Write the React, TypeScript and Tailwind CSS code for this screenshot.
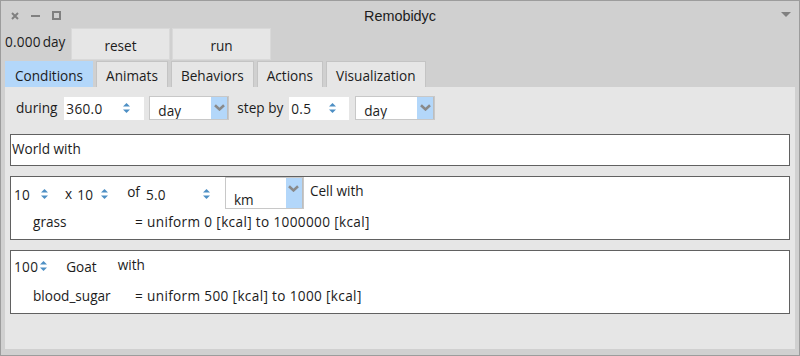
import React from 'react';

const font = { fontFamily: '"Open Sans", "Noto Sans", sans-serif' };

function Arrows() {
  return (
    <svg width="7" height="10" viewBox="0 0 7 10" className="shrink-0">
      <path d="M3.5 0 L7 3.5 L0 3.5 Z" fill="#4d8fc4" />
      <path d="M0 6.5 L7 6.5 L3.5 10 Z" fill="#4d8fc4" />
    </svg>
  );
}

function Spinner({ value, w, pl, pr, boxed }: { value: string; w: string; pl: string; pr: string; boxed?: boolean }) {
  return (
    <div className={`flex items-center justify-between h-[23px] ${pl} ${pr} ${w} ${boxed ? 'bg-white' : ''}`}>
      <span className="pt-[3px] tracking-[0.3px]">{value}</span>
      <Arrows />
    </div>
  );
}

function Chevron() {
  return (
    <svg width="11" height="7" viewBox="0 0 11 7">
      <path d="M1 1.2 L5.5 5.4 L10 1.2" fill="none" stroke="#8a8a8a" strokeWidth="2.6" />
    </svg>
  );
}

function Dropdown({ value, h, w }: { value: string; h: string; w: string }) {
  return (
    <div className={`flex ${w} ${h} border border-[#c8c8c8] bg-white`}>
      <div className="flex-1 pl-[8px] flex items-end overflow-hidden">
        <span className="leading-[16px]">{value}</span>
      </div>
      <div className="w-[17px] bg-[#b3d7fa] border-r border-[#bdbdbd] flex items-start justify-center pt-[7px]">
        <Chevron />
      </div>
    </div>
  );
}

function Tab({ label, active }: { label: string; active?: boolean }) {
  return (
    <div
      className={`h-[26px] px-[9px] flex items-center pt-[4px] border border-b-0 ${
        active ? 'bg-[#b3d7fa] border-[#b3d7fa]' : 'bg-[#e6e6e6] border-[#c4c4c4]'
      }`}
    >
      {label}
    </div>
  );
}

export default function App() {
  return (
    <div
      className="w-[800px] h-[356px] bg-[#d0d0d0] border border-[#9c9c9c] flex flex-col text-[13.6px] text-[#1c1c1c] overflow-hidden"
      style={font}
    >
      {/* title bar */}
      <div className="h-[27px] shrink-0 grid grid-cols-[1fr_auto_1fr] items-center">
        <div className="flex items-center gap-[12px] pl-[10px] pt-[2px]">
          <svg width="8" height="8" viewBox="0 0 8 8">
            <path d="M1 1 L7 7 M7 1 L1 7" stroke="#808080" strokeWidth="2" />
          </svg>
          <svg width="9" height="8" viewBox="0 0 9 8">
            <path d="M0 4 L9 4" stroke="#808080" strokeWidth="2" />
          </svg>
          <svg width="9" height="9" viewBox="0 0 9 9">
            <rect x="1" y="1" width="7" height="7" fill="none" stroke="#808080" strokeWidth="2" />
          </svg>
        </div>
        <div className="pt-[5px] text-[14.4px]" style={{ fontFamily: '"Liberation Sans", Arial, sans-serif' }}>
          Remobidyc
        </div>
        <div className="flex justify-end pr-[8px]">
          <svg width="10" height="6" viewBox="0 0 10 6">
            <path d="M0 0 L10 0 L5 5 Z" fill="#808080" />
          </svg>
        </div>
      </div>

      {/* toolbar */}
      <div className="h-[32px] shrink-0 flex items-stretch pl-[4px]">
        <div className="w-[66px] flex items-center pb-[4px]">
          <span className="tracking-[0.2px]">0.000</span>
          <span className="ml-[2px]">day</span>
        </div>
        <button className="w-[99px] bg-[#e6e6e6] border border-[#d9d9d9] pt-[5px]">reset</button>
        <button className="w-[99px] ml-[2px] bg-[#e6e6e6] border border-[#d9d9d9] pt-[5px]">run</button>
      </div>

      {/* tabs */}
      <div className="h-[26px] shrink-0 flex items-end gap-[3px] pl-[4px] mt-[1px]">
        <Tab label="Conditions" active />
        <Tab label="Animats" />
        <Tab label="Behaviors" />
        <Tab label="Actions" />
        <Tab label="Visualization" />
      </div>

      {/* panel */}
      <div className="flex-1 ml-[4px] mr-[4px] mb-[6px] bg-[#e6e6e6] px-[5px] pt-[9px] flex flex-col">
        <div className="flex items-center h-[24px]">
          <span className="ml-[6px] mr-[7px] pt-[1px]">during</span>
          <Spinner value="360.0" w="w-[80px]" pl="pl-[2px]" pr="pr-[14px]" boxed />
          <div className="ml-[5px]">
            <Dropdown value="day" h="h-[24px]" w="w-[80px]" />
          </div>
          <span className="ml-[8px] mr-[6px]">step by</span>
          <Spinner value="0.5" w="w-[60px]" pl="pl-[2px]" pr="pr-[13px]" boxed />
          <div className="ml-[6px]">
            <Dropdown value="day" h="h-[24px]" w="w-[80px]" />
          </div>
        </div>

        <div className="mt-[14px] h-[32px] bg-white border border-[#616161] flex items-center pl-[1px] pb-[2px]">
          World with
        </div>

        <div className="mt-[10px] h-[64px] bg-white border border-[#616161] flex flex-col">
          <div className="h-[33px] flex items-center">
            <Spinner value="10" w="w-[41px]" pl="pl-[3px]" pr="pr-[4px]" />
            <span className="ml-[13px] pt-[1px]">x</span>
            <Spinner value="10" w="w-[40px]" pl="pl-[5px]" pr="pr-[4px]" />
            <span className="ml-[15px] pb-[2px]">of</span>
            <Spinner value="5.0" w="w-[74px]" pl="pl-[6px]" pr="pr-[4px]" />
            <div className="ml-[11px] self-start">
              <Dropdown value="km" h="h-[32px]" w="w-[79px]" />
            </div>
            <span className="ml-[6px] pb-[4px]">Cell with</span>
          </div>
          <div className="flex items-center h-[26px] pb-[2px] tracking-[0.35px]">
            <span className="ml-[22px] w-[102px] tracking-normal">grass</span>
            <span>= uniform 0 [kcal] to 1000000 [kcal]</span>
          </div>
        </div>

        <div className="mt-[10px] h-[64px] bg-white border border-[#616161] flex flex-col">
          <div className="h-[30px] flex items-center">
            <div className="flex items-center pl-[3px] gap-[2px]">
              <span className="pt-[2px] tracking-[0.3px]">100</span>
              <Arrows />
            </div>
            <span className="ml-[19px] pt-[2px]">Goat</span>
            <span className="ml-[21px] pb-[2px]">with</span>
          </div>
          <div className="flex items-center h-[28px] pt-[2px] tracking-[0.35px]">
            <span className="ml-[22px] w-[102px] tracking-normal">blood_sugar</span>
            <span>= uniform 500 [kcal] to 1000 [kcal]</span>
          </div>
        </div>
      </div>
    </div>
  );
}
